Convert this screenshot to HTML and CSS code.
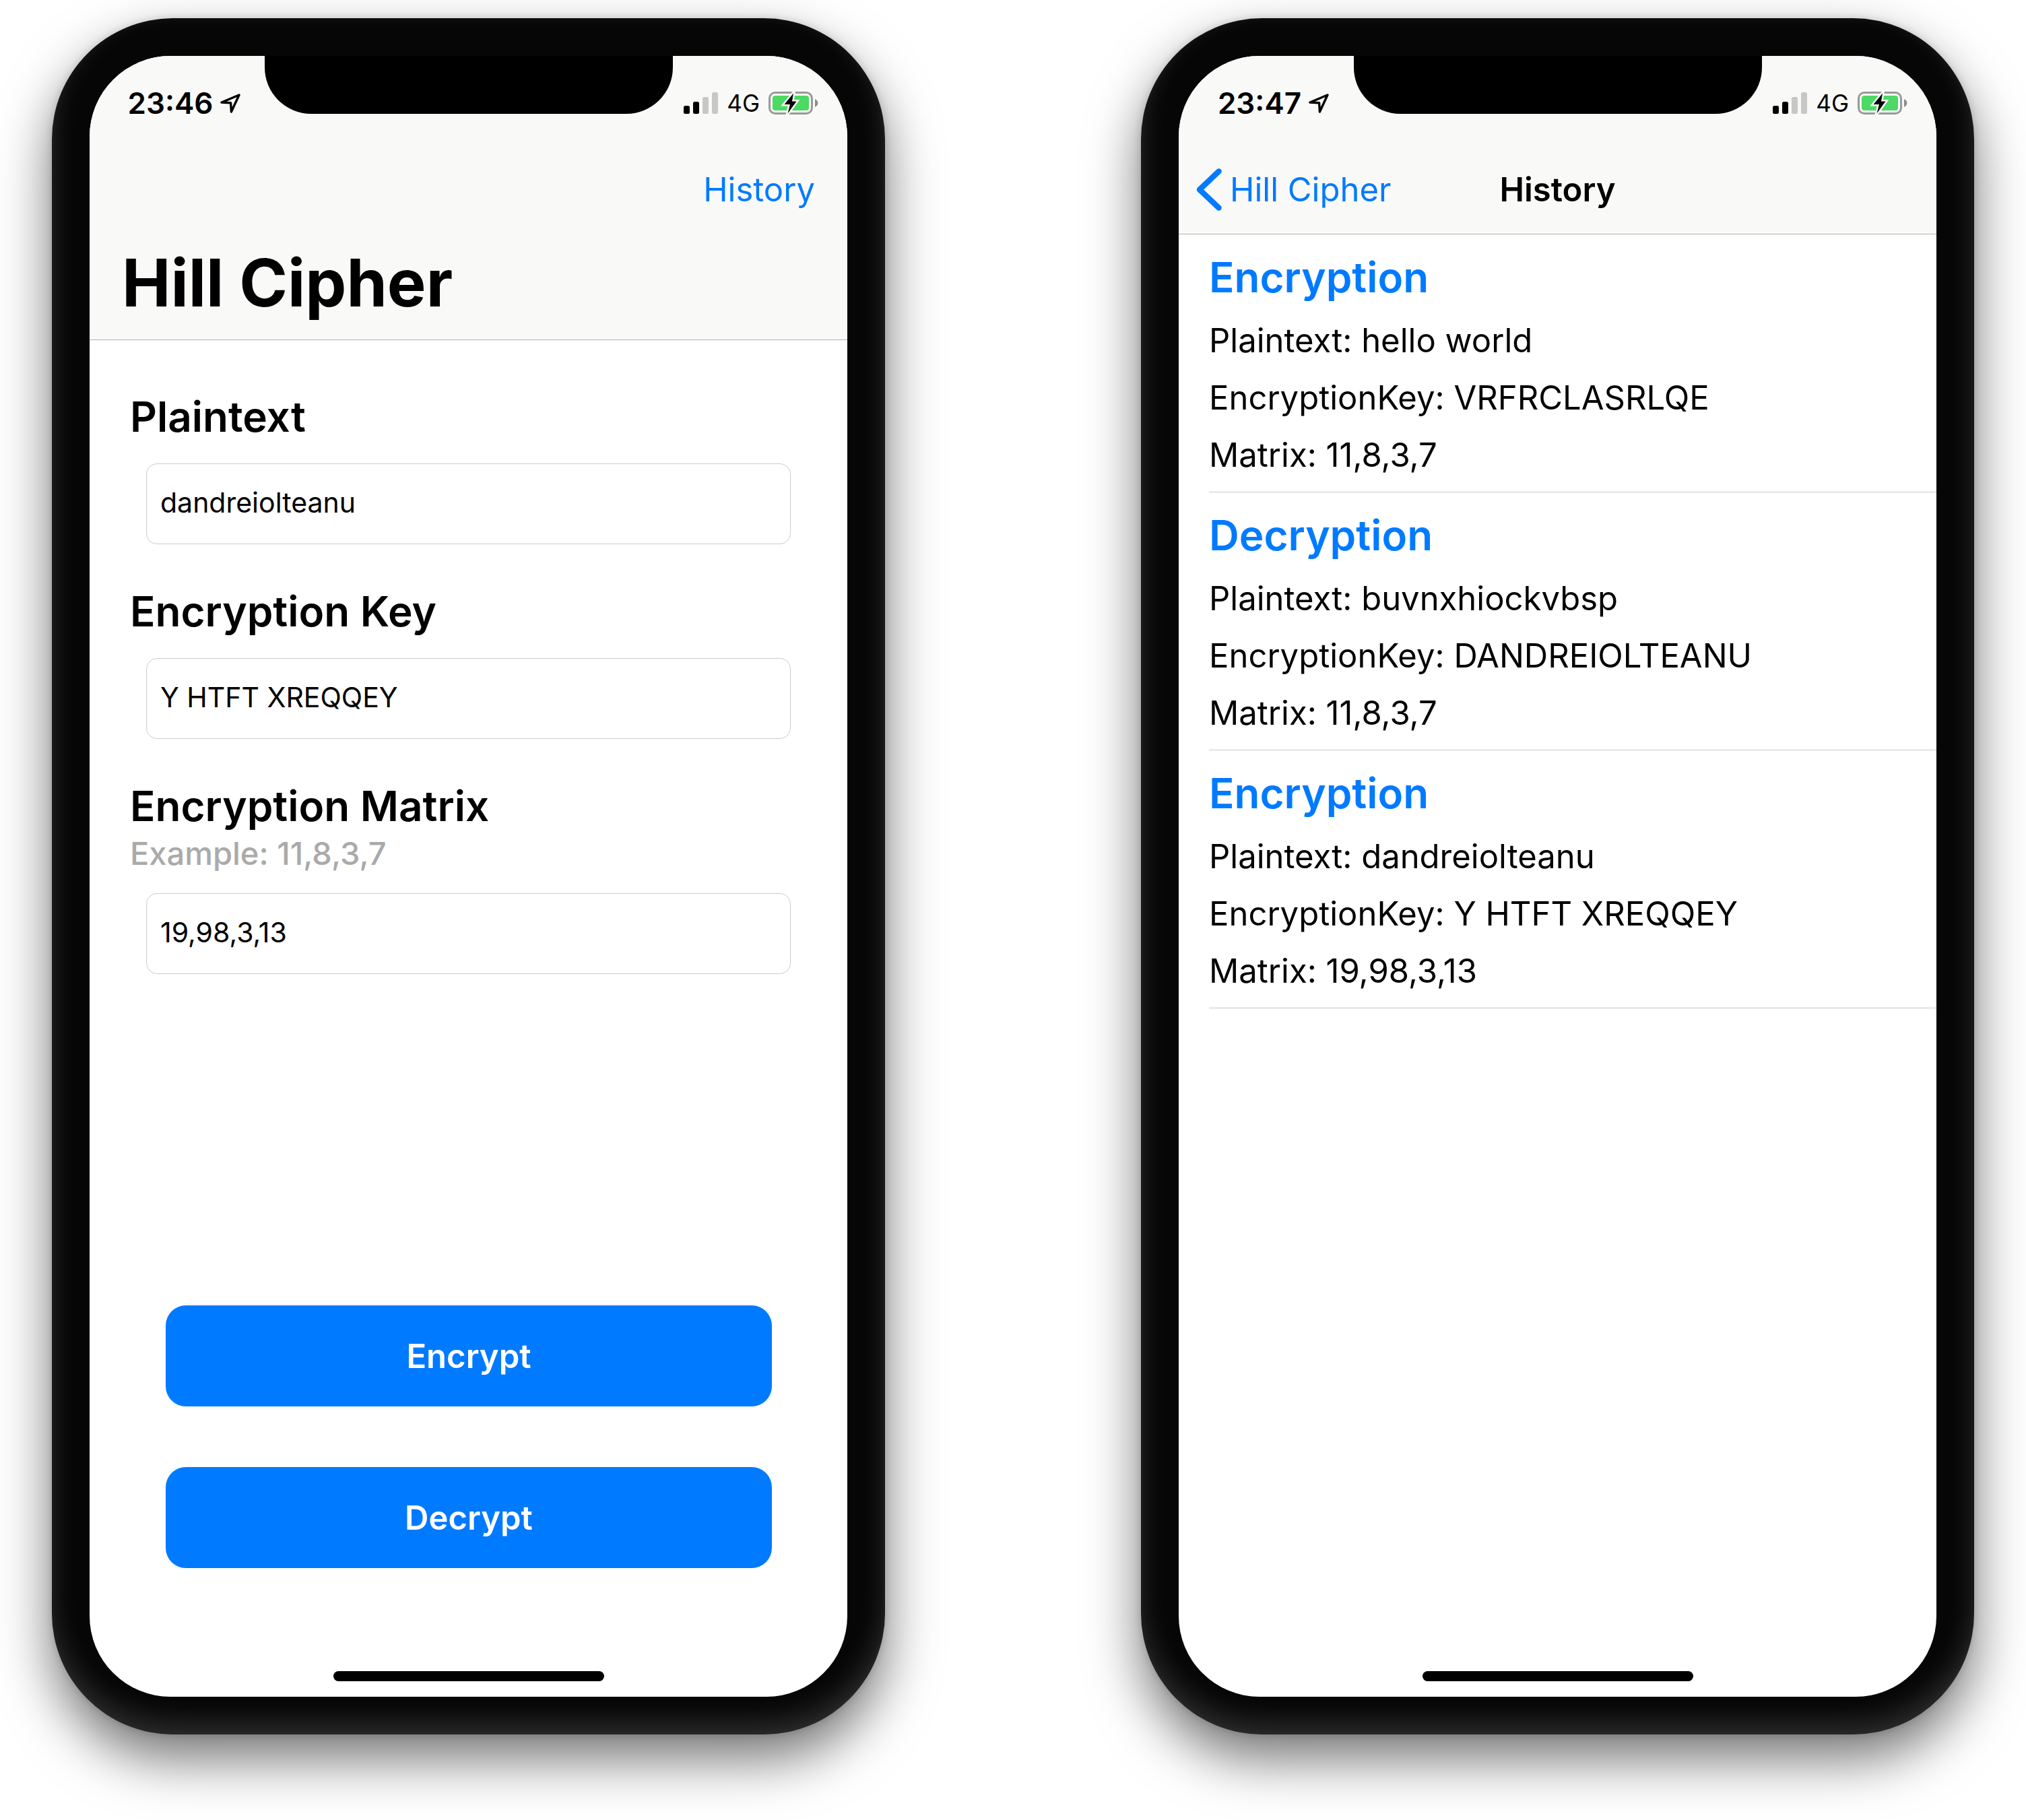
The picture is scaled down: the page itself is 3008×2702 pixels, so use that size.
FILE: index.html
```html
<!DOCTYPE html>
<html lang="en">
<head>
<meta charset="utf-8">
<meta name="viewport" content="width=device-width, initial-scale=1">
<title>Hill Cipher</title>
<link rel="stylesheet" href="styles.css">
</head>
<body>
<svg class="sprite" aria-hidden="true">
  <symbol id="location" viewBox="0 0 30 29">
    <path d="M28 2 2 13 15.600 13.800 16.400 27Z" fill="none" stroke="#000" stroke-width="3.400" stroke-linejoin="round"/>
  </symbol>
  <symbol id="signal" viewBox="0 0 51 32">
    <rect x="0" y="20" width="9" height="12" rx="2.5"/>
    <rect x="14" y="14" width="9" height="18" rx="2.5"/>
    <rect x="28" y="7" width="9" height="25" rx="2.5" fill="#c7c7c6"/>
    <rect x="42" y="0" width="9" height="32" rx="2.5" fill="#c7c7c6"/>
  </symbol>
  <symbol id="battery" viewBox="0 0 74 34">
    <rect x="1.5" y="1.5" width="63" height="31" rx="8.5" fill="none" stroke="#999" stroke-width="3"/>
    <path d="M69 11c5.800 2.500 5.800 9.500 0 12z" fill="#8c8c8c"/>
    <rect x="6" y="6" width="54" height="22" rx="4" fill="#4cd964"/>
    <path d="M37 2.500 23.500 19H32L28.500 32.500 41.500 14.500H35Z" fill="#000" stroke="#f9f9f8" stroke-width="5" stroke-miterlimit="8" paint-order="stroke"/>
  </symbol>
  <symbol id="chevron" viewBox="0 0 38 63">
    <path d="M33.500 4.500 5 31.500 33.500 58.500" fill="none" stroke="#007aff" stroke-width="8.500" stroke-linecap="round" stroke-linejoin="round"/>
  </symbol>
</svg>

<main class="showcase">
  <section class="phone">
    <div class="screen">
      <div class="notch"></div>
      <header class="bar">
        <div class="status">
          <div class="status-time"><span>23:46</span><svg class="icon-location"><use href="#location"/></svg></div>
          <div class="status-info">
            <svg class="icon-signal"><use href="#signal"/></svg>
            <span>4G</span>
            <svg class="icon-battery"><use href="#battery"/></svg>
          </div>
        </div>
        <nav class="nav"><a class="nav-link nav-end" href="#history">History</a></nav>
        <h1 class="large-title">Hill Cipher</h1>
      </header>
      <form class="form">
        <div class="field">
          <label class="label" for="plaintext">Plaintext</label>
          <input class="input" id="plaintext" type="text" value="dandreiolteanu">
        </div>
        <div class="field">
          <label class="label" for="key">Encryption Key</label>
          <input class="input" id="key" type="text" value="Y HTFT XREQQEY">
        </div>
        <div class="field">
          <label class="label" for="matrix">Encryption Matrix</label>
          <p class="hint" id="matrix-hint">Example: 11,8,3,7</p>
          <input class="input" id="matrix" type="text" value="19,98,3,13" aria-describedby="matrix-hint">
        </div>
        <div class="actions">
          <button class="button" type="button">Encrypt</button>
          <button class="button" type="button">Decrypt</button>
        </div>
      </form>
      <div class="home"></div>
    </div>
  </section>

  <section class="phone" id="history">
    <div class="screen">
      <div class="notch"></div>
      <header class="bar">
        <div class="status">
          <div class="status-time"><span>23:47</span><svg class="icon-location"><use href="#location"/></svg></div>
          <div class="status-info">
            <svg class="icon-signal"><use href="#signal"/></svg>
            <span>4G</span>
            <svg class="icon-battery"><use href="#battery"/></svg>
          </div>
        </div>
        <nav class="nav">
          <a class="nav-link nav-back" href="#plaintext"><svg class="icon-chevron"><use href="#chevron"/></svg>Hill Cipher</a>
          <h2 class="nav-title">History</h2>
        </nav>
      </header>
      <ul class="list">
        <li class="entry">
          <h3 class="entry-title">Encryption</h3>
          <p>Plaintext: hello world</p>
          <p>EncryptionKey: VRFRCLASRLQE</p>
          <p>Matrix: 11,8,3,7</p>
        </li>
        <li class="entry">
          <h3 class="entry-title">Decryption</h3>
          <p>Plaintext: buvnxhiockvbsp</p>
          <p>EncryptionKey: DANDREIOLTEANU</p>
          <p>Matrix: 11,8,3,7</p>
        </li>
        <li class="entry">
          <h3 class="entry-title">Encryption</h3>
          <p>Plaintext: dandreiolteanu</p>
          <p>EncryptionKey: Y HTFT XREQQEY</p>
          <p>Matrix: 19,98,3,13</p>
        </li>
      </ul>
      <div class="home"></div>
    </div>
  </section>
</main>
</body>
</html>
```
FILE: styles.css
```css
* {
  box-sizing: border-box;
}

body,
h1,
h2,
h3,
p,
ul {
  margin: 0;
  padding: 0;
}

body {
  background: #fff;
  color: #000;
  font-family: Inter, "Liberation Sans", sans-serif;
  font-size: 49px;
}

.sprite {
  position: absolute;
  width: 0;
  height: 0;
}

.showcase {
  display: flex;
  align-items: flex-start;
  justify-content: space-between;
  gap: 60px;
  padding: 27px 77px 127px;
}

.phone {
  flex: 0 1 1237px;
  min-width: 0;
  padding: 56px;
  border-radius: 180px;
  background: #060606;
  box-shadow:
    0 36px 80px rgba(0, 0, 0, 0.55),
    0 0 12px rgba(0, 0, 0, 0.15),
    inset 0 -20px 40px rgba(255, 255, 255, 0.15),
    inset 0 0 16px rgba(255, 255, 255, 0.04);
}

.screen {
  position: relative;
  display: flex;
  flex-direction: column;
  aspect-ratio: 1125 / 2436;
  overflow: hidden;
  border-radius: 120px;
  background: #fff;
}

.notch {
  position: absolute;
  top: 0;
  left: 260px;
  right: 259px;
  height: 86px;
  border-radius: 0 0 69px 69px;
  background: #000;
}

/* Status and navigation bar */

.bar {
  border-bottom: 1px solid #b2b2b2;
  background: #f9f9f8;
}

.status {
  display: flex;
  align-items: center;
  justify-content: space-between;
  height: 132px;
  padding: 8px 43px 0 0;
}

.status-time {
  display: flex;
  align-items: center;
  justify-content: center;
  gap: 11px;
  width: 281px;
  font-size: 44px;
  font-weight: 600;
}

.status-info {
  display: flex;
  align-items: center;
  gap: 13px;
  font-size: 35px;
}

.icon-location {
  width: 30px;
  height: 29px;
}

.icon-signal {
  width: 51px;
  height: 32px;
}

.icon-battery {
  width: 74px;
  height: 34px;
}

.icon-chevron {
  width: 38px;
  height: 63px;
}

.nav {
  display: grid;
  grid-template-columns: 1fr auto 1fr;
  align-items: center;
  height: 132px;
  padding: 0 48px 0 26px;
}

.nav-link {
  color: #007aff;
  text-decoration: none;
}

.nav-back {
  display: flex;
  align-items: center;
  gap: 12px;
  margin-right: -22px;
}

.nav-end {
  grid-column: 3;
  justify-self: end;
}

.nav-title {
  padding-left: 22px;
  font-size: 49px;
  font-weight: 600;
}

.large-title {
  height: 157px;
  padding: 0 48px;
  font-size: 97px;
  font-weight: 700;
  line-height: 146px;
}

/* Cipher form */

.form {
  display: flex;
  flex: 1;
  flex-direction: column;
  gap: 60px;
  padding: 74px 60px 0;
}

.field {
  display: flex;
  flex-direction: column;
}

.label {
  font-size: 62px;
  font-weight: 600;
  line-height: 80px;
}

.hint {
  color: #aaa;
  font-size: 47px;
  font-weight: 500;
  line-height: 60px;
}

.input {
  height: 120px;
  margin: 29px 24px 0;
  padding: 0 20px 4px;
  border: 1px solid #ccc;
  border-radius: 16px;
  background: #fff;
  color: #000;
  font-family: inherit;
  font-size: 41px;
}

.actions {
  display: flex;
  flex-direction: column;
  gap: 90px;
  margin-top: auto;
  padding: 0 52px 153px 53px;
}

.button {
  height: 150px;
  border: 0;
  border-radius: 30px;
  background: #007aff;
  color: #fff;
  font-family: inherit;
  font-size: 49px;
  font-weight: 600;
}

/* History list */

.list {
  flex: 1;
  padding-left: 45px;
  list-style: none;
}

.entry {
  padding: 20px 0 12px;
  border-bottom: 1px solid #c8c7cc;
  line-height: 85px;
}

.entry-title {
  margin-bottom: 7px;
  color: #007aff;
  font-size: 62px;
  font-weight: 600;
  line-height: 88px;
}

.home {
  flex: none;
  align-self: center;
  width: 402px;
  height: 15px;
  margin-bottom: 23px;
  border-radius: 8px;
  background: #000;
}
```
